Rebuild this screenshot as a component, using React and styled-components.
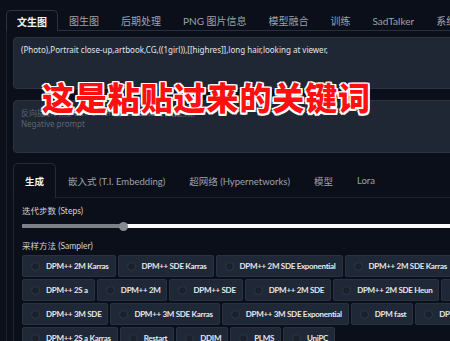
import React from 'react';
import styled, { createGlobalStyle } from 'styled-components';

const GlobalStyle = createGlobalStyle`
  html, body {
    margin: 0;
    padding: 0;
    background: #0b0f19;
    overflow: hidden;
  }
  body {
    font-family: Lato, 'Noto Sans CJK SC', sans-serif;
  }
`;

const Page = styled.div`
  position: relative;
  width: 520px;
  height: 341px;
  padding: 10px 0 0 6px;
  box-sizing: border-box;
  background: #0b0f19;
  color: #e5e7eb;
`;

const TabBar = styled.div`
  display: flex;
  align-items: flex-end;
  border-bottom: 1px solid #283040;
  height: 20px;
`;

const TopTab = styled.div`
  height: ${(p) => (p.$active ? '21px' : '20px')};
  margin-bottom: ${(p) => (p.$active ? '-1px' : '0')};
  padding: 0 10px;
  display: flex;
  align-items: center;
  box-sizing: border-box;
  font-size: 10px;
  white-space: nowrap;
  color: ${(p) => (p.$active ? '#f3f4f6' : '#9ca3af')};
  font-weight: ${(p) => (p.$active ? 700 : 400)};
  background: #0b0f19;
  border: 1px solid ${(p) => (p.$active ? '#2b3344' : 'transparent')};
  border-bottom: none;
  border-radius: 5px 5px 0 0;
`;

const OuterPanel = styled.div`
  border-left: 1px solid #1c2230;
  padding: 6px 0 0 6px;
  display: flex;
  flex-direction: column;
`;

const PromptArea = styled.div`
  height: ${(p) => p.$h}px;
  background: #1f2634;
  border: 1px solid #2a3243;
  border-radius: 4px;
  margin-top: ${(p) => p.$mt || 0}px;
  padding: 6px 7px;
  box-sizing: border-box;
  font-family: 'Noto Sans', 'Noto Sans CJK SC', sans-serif;
  font-size: 8px;
  line-height: 11px;
  color: ${(p) => (p.$placeholder ? '#5d6677' : '#e5e7eb')};
  white-space: nowrap;
`;

const Overlay = styled.div`
  position: absolute;
  left: 42px;
  top: 73px;
  font-family: 'Noto Sans CJK SC', sans-serif;
  font-weight: 900;
  font-size: 32px;
  letter-spacing: 0.9px;
  color: #ff1010;
  white-space: nowrap;
  text-shadow:
    -1.5px -1.5px 0 #fff, 1.5px -1.5px 0 #fff, -1.5px 1.5px 0 #fff, 1.5px 1.5px 0 #fff,
    0 -1.5px 0 #fff, 0 1.5px 0 #fff, -1.5px 0 0 #fff, 1.5px 0 0 #fff;
`;

const SubTabBar = styled.div`
  display: flex;
  align-items: flex-end;
  margin-top: 10px;
  height: 34px;
  border-bottom: 1px solid #1c2230;
`;

const SubTab = styled.div`
  height: ${(p) => (p.$active ? '35px' : '34px')};
  margin-bottom: ${(p) => (p.$active ? '-1px' : '0')};
  padding: 0 11px;
  display: flex;
  align-items: center;
  box-sizing: border-box;
  font-size: 9.5px;
  white-space: nowrap;
  color: ${(p) => (p.$active ? '#f3f4f6' : '#9ca3af')};
  font-weight: ${(p) => (p.$active ? 700 : 400)};
  background: #0b0f19;
  border: 1px solid ${(p) => (p.$active ? '#232a38' : 'transparent')};
  border-bottom: none;
  border-radius: 5px 5px 0 0;
`;

const InnerPanel = styled.div`
  border-left: 1px solid #1c2230;
  padding: 7px 0 0 8px;
  display: flex;
  flex-direction: column;
`;

const Label = styled.div`
  font-size: 8.5px;
  line-height: 12px;
  color: #d1d5db;
  margin-top: ${(p) => p.$mt || 0}px;
`;

const Track = styled.div`
  margin-top: 7px;
  height: 4px;
  border-radius: 2px;
  background: #f9fafb;
  display: flex;
  align-items: center;
`;

const TrackFill = styled.div`
  height: 4px;
  border-radius: 2px;
  background: #7c7f86;
`;

const Thumb = styled.div`
  width: 9px;
  height: 9px;
  border-radius: 50%;
  background: #878a90;
  margin-left: -4px;
  flex: none;
`;

const RadioRows = styled.div`
  display: flex;
  flex-direction: column;
  gap: 2px;
  margin-top: 3px;
`;

const RadioRow = styled.div`
  display: flex;
  gap: 2px;
`;

const RadioItem = styled.label`
  display: flex;
  align-items: center;
  gap: 6px;
  height: 22px;
  padding: 0 6px 0 8px;
  box-sizing: border-box;
  background: #1f2836;
  border: 1px solid #2a3242;
  border-radius: 2px;
  font-size: 8px;
  letter-spacing: -0.3px;
  font-weight: 700;
  color: #e5e7eb;
  white-space: nowrap;
  flex: none;
`;

const Circle = styled.span`
  width: 9px;
  height: 9px;
  border-radius: 50%;
  border: 1px solid #2e3747;
  background: #1a212d;
  box-sizing: border-box;
`;

const topTabs = ['文生图', '图生图', '后期处理', 'PNG 图片信息', '模型融合', '训练', 'SadTalker', '系统设置'];

const subTabs = ['生成', '嵌入式 (T.I. Embedding)', '超网络 (Hypernetworks)', '模型', 'Lora'];

const samplerRows = [
  ['DPM++ 2M Karras', 'DPM++ SDE Karras', 'DPM++ 2M SDE Exponential', 'DPM++ 2M SDE Karras', 'Euler a'],
  ['DPM++ 2S a', 'DPM++ 2M', 'DPM++ SDE', 'DPM++ 2M SDE', 'DPM++ 2M SDE Heun', 'DPM++ 2M SDE Heun Karras'],
  ['DPM++ 3M SDE', 'DPM++ 3M SDE Karras', 'DPM++ 3M SDE Exponential', 'DPM fast', 'DPM adaptive'],
  ['DPM++ 2S a Karras', 'Restart', 'DDIM', 'PLMS', 'UniPC'],
];

export default function App() {
  return (
    <>
      <GlobalStyle />
      <Page>
        <TabBar>
          {topTabs.map((t, i) => (
            <TopTab key={t} $active={i === 0}>{t}</TopTab>
          ))}
        </TabBar>
        <OuterPanel>
          <PromptArea $h={52}>
            (Photo),Portrait close-up,artbook,CG,((1girl)),[[highres]],long hair,looking at viewer,
          </PromptArea>
          <PromptArea $h={53} $mt={11} $placeholder>
            反向提示词(按 Ctrl+Enter 或 Alt+Enter 开始生成)
            <br />
            Negative prompt
          </PromptArea>
          <SubTabBar>
            {subTabs.map((t, i) => (
              <SubTab key={t} $active={i === 0}>{t}</SubTab>
            ))}
          </SubTabBar>
          <InnerPanel>
            <Label>迭代步数 (Steps)</Label>
            <Track>
              <TrackFill style={{ width: '101px' }} />
              <Thumb />
            </Track>
            <Label $mt={12}>采样方法 (Sampler)</Label>
            <RadioRows>
              {samplerRows.map((row, r) => (
                <RadioRow key={r}>
                  {row.map((s) => (
                    <RadioItem key={s}>
                      <Circle />
                      {s}
                    </RadioItem>
                  ))}
                </RadioRow>
              ))}
            </RadioRows>
          </InnerPanel>
        </OuterPanel>
        <Overlay>这是粘贴过来的关键词</Overlay>
      </Page>
    </>
  );
}
